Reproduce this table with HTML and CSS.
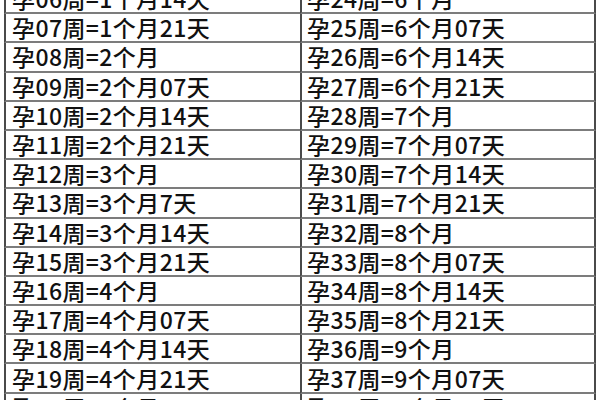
FILE: index.html
```html
<!DOCTYPE html>
<html lang="zh-CN">
<head>
<meta charset="utf-8">
<link rel="stylesheet" href="styles.css">
</head>
<body>
<div class="page">
  <div class="grid">
    <div class="c l">孕06周=1个月14天</div><div class="c r">孕24周=6个月</div>
    <div class="c l">孕07周=1个月21天</div><div class="c r">孕25周=6个月07天</div>
    <div class="c l">孕08周=2个月</div><div class="c r">孕26周=6个月14天</div>
    <div class="c l">孕09周=2个月07天</div><div class="c r">孕27周=6个月21天</div>
    <div class="c l">孕10周=2个月14天</div><div class="c r">孕28周=7个月</div>
    <div class="c l">孕11周=2个月21天</div><div class="c r">孕29周=7个月07天</div>
    <div class="c l">孕12周=3个月</div><div class="c r">孕30周=7个月14天</div>
    <div class="c l">孕13周=3个月7天</div><div class="c r">孕31周=7个月21天</div>
    <div class="c l">孕14周=3个月14天</div><div class="c r">孕32周=8个月</div>
    <div class="c l">孕15周=3个月21天</div><div class="c r">孕33周=8个月07天</div>
    <div class="c l">孕16周=4个月</div><div class="c r">孕34周=8个月14天</div>
    <div class="c l">孕17周=4个月07天</div><div class="c r">孕35周=8个月21天</div>
    <div class="c l">孕18周=4个月14天</div><div class="c r">孕36周=9个月</div>
    <div class="c l">孕19周=4个月21天</div><div class="c r">孕37周=9个月07天</div>
    <div class="c l">孕20周=5个月</div><div class="c r">孕38周=9个月14天</div>
  </div>
</div>
</body>
</html>
```
FILE: styles.css
```css
html, body {
  margin: 0;
  padding: 0;
  background: #fff;
}
.page {
  width: 600px;
  height: 400px;
  overflow: hidden;
}
.grid {
  margin-top: -15px;
  margin-left: 4px;
  display: grid;
  grid-template-columns: 296px 296px;
  grid-auto-rows: 29.2px;
  font-family: "Noto Sans CJK SC", "Noto Sans", sans-serif;
  font-size: 23px;
  font-weight: 500;
  letter-spacing: 0.4px;
  color: #111;
}
.c {
  box-sizing: border-box;
  border-bottom: 2px solid #7c7c7c;
  border-left: 2px solid #4a4a4a;
  display: flex;
  align-items: center;
  padding-left: 6px;
  white-space: nowrap;
  line-height: 1;
}
.r {
  border-right: 2px solid #4a4a4a;
  padding-left: 5px;
}
```
